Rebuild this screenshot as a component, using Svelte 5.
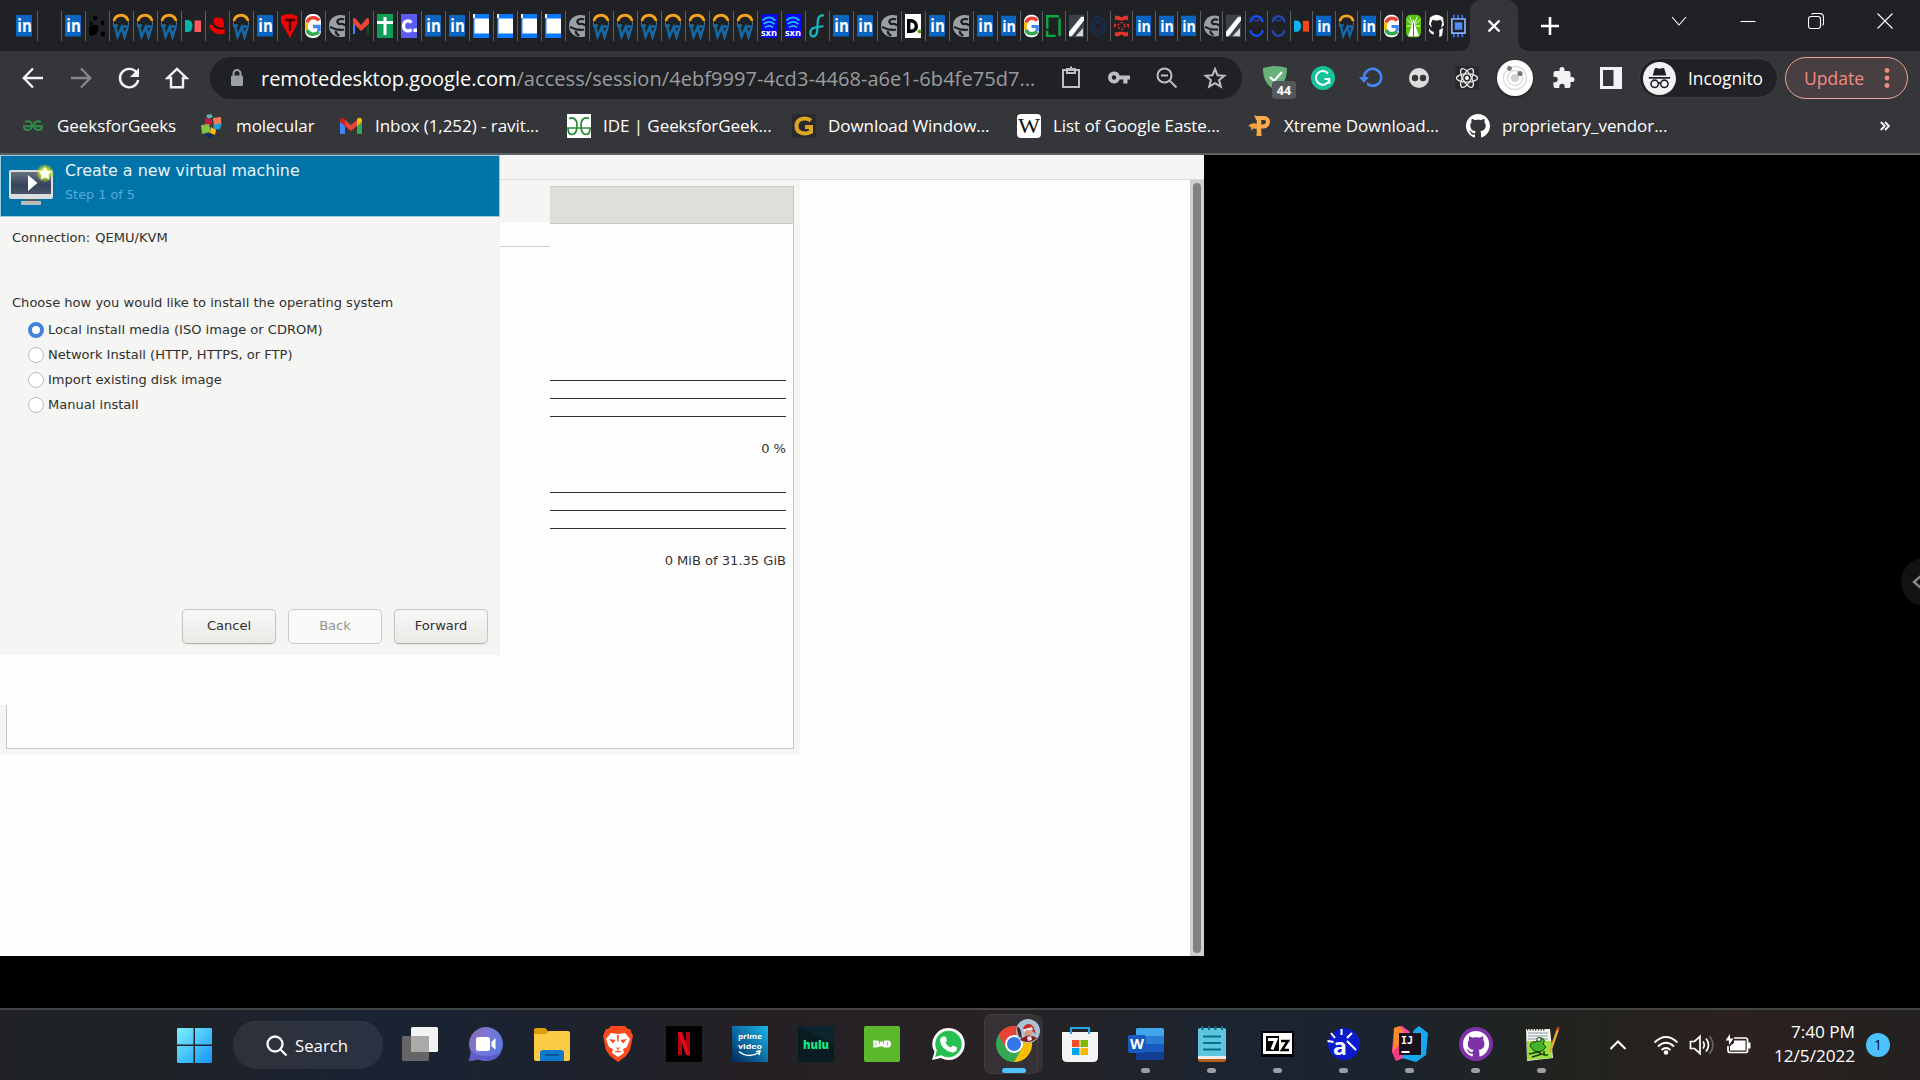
<script>
  // Browser tabs, in strip order; the last group is slightly narrower.
  const wideTabs = [
    'in', '', 'in', 'paws', 'w', 'w', 'w', 'di', 'hat', 'w', 'in', 't', 'g', 'globe', 'gmail', 'plus', 'c',
    'in', 'in', 'page', 'page', 'page', 'page', 'globe', 'w', 'w', 'w', 'w', 'w', 'w', 'w', 'sxn', 'sxn', 'f',
    'in', 'in', 'globe', 'd', 'in', 'globe', 'in'
  ];
  const slimTabs = [
    'in', 'g', 'bracket', 'slash', 'hex', 'virus', 'in', 'in', 'in', 'globe', 'slash', 'ring', 'ring2', 'di2',
    'in', 'w', 'in', 'g', 'tree', 'cat', 'chip'
  ];

  const bookmarks = [
    { icon: 'gfg', label: 'GeeksforGeeks' },
    { icon: 'cubes', label: 'molecular' },
    { icon: 'gmail2', label: 'Inbox (1,252) - ravit...' },
    { icon: 'ide', label: 'IDE | GeeksforGeek...' },
    { icon: 'goldg', label: 'Download Window...' },
    { icon: 'wiki', label: 'List of Google Easte...' },
    { icon: 'xp', label: 'Xtreme Download...' },
    { icon: 'octo', label: 'proprietary_vendor...' }
  ];

  const options = [
    'Local install media (ISO image or CDROM)',
    'Network Install (HTTP, HTTPS, or FTP)',
    'Import existing disk image',
    'Manual install'
  ];
  let selected = $state(0);

  const apps = [
    { icon: 'taskview' }, { icon: 'chat' }, { icon: 'folder' }, { icon: 'brave' }, { icon: 'netflix' },
    { icon: 'prime' }, { icon: 'hulu' }, { icon: 'duo' }, { icon: 'whatsapp' }, { icon: 'chrome', active: true },
    { icon: 'store' }, { icon: 'word', open: true }, { icon: 'notepad', open: true }, { icon: 'zip', open: true },
    { icon: 'alef', open: true }, { icon: 'idea', open: true }, { icon: 'hub', open: true }, { icon: 'npp', open: true }
  ];
</script>

{#snippet octocat(fill)}
  <path {fill} fill-rule="evenodd" d="M12 0C5.37 0 0 5.37 0 12c0 5.31 3.435 9.795 8.205 11.385.6.105.825-.255.825-.57 0-.285-.015-1.23-.015-2.235-3.015.555-3.795-.735-4.035-1.41-.135-.345-.72-1.41-1.23-1.695-.42-.225-1.02-.78-.015-.795.945-.015 1.62.87 1.845 1.23 1.08 1.815 2.805 1.305 3.495.99.105-.78.42-1.305.765-1.605-2.67-.3-5.46-1.335-5.46-5.925 0-1.305.465-2.385 1.23-3.225-.12-.3-.54-1.53.12-3.18 0 0 1.005-.315 3.3 1.23.96-.27 1.98-.405 3-.405s2.04.135 3 .405c2.295-1.56 3.3-1.23 3.3-1.23.66 1.65.24 2.88.12 3.18.765.84 1.23 1.905 1.23 3.225 0 4.605-2.805 5.625-5.475 5.925.435.375.81 1.095.81 2.22 0 1.605-.015 2.895-.015 3.3 0 .315.225.69.825.57A12.02 12.02 0 0 0 24 12c0-6.63-5.37-12-12-12z" />
{/snippet}

{#snippet favicon(name)}
  <svg class="fav" viewBox="0 0 16 24">
    {#if name === 'in'}
      <path fill="#0a66c2" d="M0 1h16v21.500H0z" /><text class="g-in" x="1.300" y="18" textLength="14.500" lengthAdjust="spacingAndGlyphs">in</text>
    {:else if name === 'paws'}
      <g fill="#000"><ellipse cx="6" cy="4" rx="2.2" ry="2.6" /><ellipse cx="13.500" cy="9" rx="2" ry="2.4" /><path d="M0 14c1-3 5-4 8-3 2 2 2 6-1 9-3 2-7 3-7 0zM1 6l3 3-3 3z" /><ellipse cx="14" cy="20" rx="2.2" ry="2.5" /></g>
    {:else if name === 'w'}
      <path fill="none" stroke="#f5a21d" stroke-width="2.800" d="M.8 6.800C3-.600 13-.600 15.200 6.800" /><path fill="none" stroke="#1669a8" stroke-width="2.500" d="M0 11.500h5M8 12.500h7.500M2 12 4.500 22.500 8.800 13 11.500 22.500 15 12" /><path fill="none" stroke="#6d7177" stroke-width=".9" d="M.5 7v4M15.500 7v4" />
    {:else if name === 'di' || name === 'di2'}
      <path fill={name === 'di' ? '#03b5aa' : '#0bb4f5'} d="M0 6h3c6 0 6 12 0 12H0z" /><path fill={name === 'di' ? '#ff5a5f' : '#f4451f'} d="M9.500 6.500H16v11.500H9.500z" />
    {:else if name === 'hat'}
      <path fill="#e00" d="M5 4.500c2-2 4 0 7-1 2 1 3 5 3 8l1 7c-2 4-12 1-15-4-2-3 1-5 3-4z" /><path fill="none" stroke="#111" stroke-width="1.800" d="M3.500 9.500c2 4 8 6 12 4.500" />
    {:else if name === 't'}
      <path fill="#f00505" d="M0 2q8-4 16 0v8L9 24 0 8z" /><path stroke="#3a0000" stroke-width="2.400" fill="none" d="M4 6h10M9 6v11" />
    {:else if name === 'g'}
      <rect width="16" height="24" rx="7" fill="#fff" /><path fill="none" stroke="#ea4335" stroke-width="3.600" d="M2 8.500C4 2.500 11 2.500 14 6.500" /><path fill="none" stroke="#fbbc05" stroke-width="3" d="M1.500 8v8" /><path fill="none" stroke="#34a853" stroke-width="3.600" d="M2 16c2 5 8 5.500 12 2" /><path fill="none" stroke="#4285f4" stroke-width="3.400" d="M8 12.500h6v5" />
    {:else if name === 'globe'}
      <path fill="#9aa0a6" d="M16 1.500C6-1 0 5 0 12s6 13 16 10.500z" /><path fill="none" stroke="#202124" stroke-width="2.300" d="M15 5.500c-5-2-9 2-5 4.500 3 0 5-1 6 2M1 13c4 1 5 3 8 2.500 3 0 3 1 6 0M10 22c-1-2-4-2-3-5" />
    {:else if name === 'gmail'}
      <path fill="#4285f4" d="M0 9l2 2v9H0z" /><path fill="#ea4335" d="M0 5q1-2 3 0l5 6 5-6q2-2 3 0v5l-8 7-8-8z" /><path fill="#174d23" d="M14 12l2-2v10h-2z" />
    {:else if name === 'plus'}
      <path fill="#0f9d58" d="M0 0h16v24H0z" /><path stroke="#fff" stroke-width="3" d="M0 8.500h16M8 3v18" />
    {:else if name === 'c'}
      <path fill="#5b5bf6" d="M0 0h16v24H0z" /><path fill="none" stroke="#fff" stroke-width="3.200" d="M10.500 8.500C7 5 2.500 7.500 2.500 12s4.500 6.500 8 3.500" /><path fill="#fff" d="M12.500 14.500H16V18h-3.500z" />
    {:else if name === 'page'}
      <path fill="#057aff" d="M0 0h16v24H0z" /><path fill="#fff" d="M1.500 4.500H16v15H1.500zM0 0h2v4H0z" />
    {:else if name === 'sxn'}
      <path fill="#0808f0" d="M0 0h16v24H0z" /><path fill="none" stroke="#16bdf5" stroke-width="1.800" d="M1.500 6.500c4-4 9-4 13 0M2.500 10c4-3 7-3 11 0M4 13.500c3-2.400 5-2.400 8 0" /><text class="g-sxn" x="0" y="21.500" textLength="16" lengthAdjust="spacingAndGlyphs">sxn</text>
    {:else if name === 'f'}
      <path fill="none" stroke="#18b8c0" stroke-width="2.200" d="M15 1.500c-6-1-6.500 4-6.500 9.500 0 8-1 11.500-5 11.500-3-1-3-7 1-8.500 4-1.500 6-1 10-2" />
    {:else if name === 'd'}
      <path fill="#fff" d="M0 0h16v24H0z" /><path fill="none" stroke="#000" stroke-width="3.400" d="M3.700 6.700v10.600h2c8 0 7-10.600 0-10.600z" /><circle cx="14.500" cy="17.500" r="1.900" fill="#65a30d" />
    {:else if name === 'bracket'}
      <path fill="none" stroke="#0aa83f" stroke-width="2.600" d="M1.300 15V1.500H14M1.300 17v5.500h9M14.500 4v19" />
    {:else if name === 'slash'}
      <path fill="#3b4347" d="M0 0h16v24H0z" /><path fill="#fff" d="M0 18 13 2h3v4L3 23H0z" /><path fill="#d5d8d9" d="M7 23l8-9v9z" />
    {:else if name === 'hex'}
      <path fill="none" stroke="#172e4e" stroke-width="1.800" d="M8 1l7 5.500v11L8 23l-7-5.500v-11zM8 7l4 3v5l-4 3-4-3v-5zM8 1v6M4 15l-3 3M12 15l3 3" />
    {:else if name === 'virus'}
      <path fill="#e23428" d="M1 1h4l3 2 3-2h4v5l-2-1-3 1H6L3 5 1 6zM0 9l3 2-3 3zM16 9l-3 2 3 3zM1 18l2 1 3-1h4l3 1 2-1v5h-4l-3-2-3 2H1z" /><circle cx="8" cy="12" r="3.500" fill="none" stroke="#e23428" stroke-width="1.800" stroke-dasharray="1.800 2" />
    {:else if name === 'ring' || name === 'ring2'}
      <path fill="none" stroke={name === 'ring' ? '#154df0' : '#2147b4'} stroke-width="2.600" d="M1.500 8c1-8.500 12-8.500 13 0M1.500 16.500c1 8 12 8 13 0" /><path fill="none" stroke="#1746c8" stroke-width="1.500" d="M4 4.500q4 4 8 0" />
    {:else if name === 'tree'}
      <rect width="16" height="24" rx="5" fill="#58c409" /><path fill="#fff" d="M8 4l2 8 4 11H2l4-11z" /><path stroke="#fff" d="M8 12 1 5M8 12 4 2M8 12l4-10M8 12l7-7M8 12H1M8 12h7" /><path stroke="#287b10" d="M8 9v14" />
    {:else if name === 'cat'}
      <path fill="#fff" d="M1 3q7-6 14 0l1 8-3 3 1-6-2-3-2 1H6L4 5 2 9l1 5-3-4zM0 14q2 4 5 4v3q-3 0-5-4zM11 16l4-2-1 8-3 2z" />
    {:else if name === 'chip'}
      <path stroke="#3573e8" stroke-width="2" d="M3 0v24M7.500 0v24M12 0v24" /><path fill="#202124" stroke="#8ab0f4" stroke-width="1.800" d="M.9 4.500h14v15H.9z" /><path fill="#4f8df5" d="M4 8h8v8H4z" />
    {/if}
  </svg>
{/snippet}

{#snippet markicon(name)}
  <svg class="mark" viewBox="0 0 24 24">
    {#if name === 'gfg'}
      <path fill="none" stroke="#2f8d46" stroke-width="1.900" d="M4 7.800c4-1.500 7 0 7 3.700 0 5-7 6-8 2M20 7.800c-4-1.500-7 0-7 3.700 0 5 7 6 8 2M2 12.300h20" />
    {:else if name === 'cubes'}
      <path fill="#5bb5b0" d="M6 1l5-1 2 3-5 2z" /><path fill="#c2183a" d="M5 4l7 1v6l-7 1z" /><path fill="#f47b54" d="M13 4l8-1v7l-7 2z" /><path fill="#1c9fd0" d="M13 11l9-2-2 6-6 1z" /><path fill="#83c341" d="M1 11l8-1 2 8-9 2z" /><path fill="#fdb913" d="M11 13l5 3-1 5-5-2z" /><path fill="#092f62" d="M6 19l8 2-5 3-4-2z" />
    {:else if name === 'gmail2'}
      <path fill="#4285f4" d="M1 7l5 4v9H2q-1 0-1-1z" /><path fill="#34a853" d="M18 11l5-4v12q0 1-1 1h-4z" /><path fill="#ea4335" d="M6 6l6 5 6-5v6l-6 5-6-5z" /><path fill="#c5221f" d="M1 6q1-4 5-1v7l-5-4z" /><path fill="#fbbc04" d="M23 6q-1-4-5-1v7l5-4z" />
    {:else if name === 'ide'}
      <path fill="#fff" d="M0 0h24v24H0z" /><path fill="none" stroke="#2a8a35" stroke-width="1.700" d="M2 4.500C6 2.500 10 5 10 11s-2 9.500-5 9.500-4-3-4-6.500h22c0 3.500-1 6.500-4 6.500s-5-3.500-5-9.500 4-8.500 8-6.500" />
    {:else if name === 'goldg'}
      <rect width="24" height="24" rx="2" fill="#292a2d" /><path fill="none" stroke="#dca71f" stroke-width="4" d="M19 6.500C14 2.500 4.500 4.500 4.500 12s8 9 14.500 6v-5h-6" />
    {:else if name === 'wiki'}
      <rect width="24" height="24" rx="4" fill="#fff" /><text class="g-wiki" x="1" y="18.500" textLength="22" lengthAdjust="spacingAndGlyphs">W</text>
    {:else if name === 'xp'}
      <path fill="none" stroke="#fbaa50" stroke-width="4.500" d="M11 21V4" /><path fill="none" stroke="#fbaa50" stroke-width="4" d="M8 4h8c6 0 5 8.500-1 8.500H6" /><path fill="#f8a13c" d="M8 1.500H6l2 4zM0 12q4-4 9-2v4.500H5L3.500 17l-.5-4zM8.500 20h5v2h-5z" />
    {:else if name === 'octo'}
      {@render octocat('#fff')}
    {/if}
  </svg>
{/snippet}

{#snippet appicon(name)}
  <svg class="app-svg" viewBox="0 0 36 36">
    {#if name === 'taskview'}
      <rect x="0" y="10" width="27" height="25" rx="1.500" fill="#666" /><rect x="9" y="1" width="27" height="25" rx="1.500" fill="#f2f2f2" /><path fill="#aaa" d="M9 10h18v16H9z" />
    {:else if name === 'chat'}
      <defs><linearGradient id="ch" x1="0" x2="1" y1="0" y2=".6"><stop stop-color="#9068a8" /><stop offset=".5" stop-color="#7878d8" /><stop offset="1" stop-color="#5a78dc" /></linearGradient></defs>
      <path fill="url(#ch)" d="M18 1a17 17 0 1 1-7 32.500L1 35l2-9A17 17 0 0 1 18 1z" /><path fill="#5b56c4" d="M3 24q8 10 30 3-6 11-22 6.500L1 35z" opacity=".8" /><rect x="8" y="11" width="14" height="14" rx="2.500" fill="#fff" /><path fill="#fff" d="M23.500 16l4-4v12l-4-4z" />
    {:else if name === 'folder'}
      <path fill="#e09f09" d="M0 4q0-2 2-2h9l4 4-3 4H0z" /><path fill="#fccb45" d="M0 8h12l3-3h19q2 0 2 2v26q0 2-2 2H2q-2 0-2-2z" /><path fill="#0f78cf" d="M6 35V27q0-3 3-3h18q3 0 3 3v8z" /><path stroke="#07528f" stroke-width="1.800" d="M11 29h14" />
    {:else if name === 'brave'}
      <path fill="#fb4b1c" d="M11 0h14l3 3h2l3 7-3 14-4 6-8 6-8-6-4-6L3 10l3-7h2z" /><path fill="#fff" d="M11 7l7 1 7-1 5 6-3 8-4 2 1 4-6 4-6-4 1-4-4-2-3-8z" /><path fill="#fb4b1c" d="M9 13l6.500 1-2.500 3.500zM27 13l-6.500 1 2.500 3.500zM15.500 21l2.500 1 2.500-1-2.500 3zM14 25.500l4-1 4 1-4 1zM17 9h2l-.5 7h-1z" />
    {:else if name === 'netflix'}
      <path d="M0 0h36v36H0z" /><path fill="#b1060f" d="M12 6h4v23l-4 .6zM20 6h4v23.600l-4-.6z" /><path fill="#e50914" d="M12 6h4l8 23.600-4-.6z" />
    {:else if name === 'prime'}
      <defs><linearGradient id="pv" x1="1" x2="0" y1="0" y2="1"><stop stop-color="#19b5e8" /><stop offset="1" stop-color="#02295f" /></linearGradient></defs>
      <path fill="url(#pv)" d="M0 0h36v36H0z" /><text class="g-prime" x="6" y="12.500" textLength="24" lengthAdjust="spacingAndGlyphs">prime</text><text class="g-prime" x="6" y="22.500" textLength="24" lengthAdjust="spacingAndGlyphs">video</text><path fill="none" stroke="#fff" stroke-width="1.500" d="M7 25.500c6 5 14 5 20 1M24 25.500l4-.5-1 4" />
    {:else if name === 'hulu'}
      <path fill="#081c22" d="M0 0h36v36H0z" /><path fill="#102c38" d="M0 0h36v18z" opacity=".6" /><text class="g-hulu" x="5" y="22.500" textLength="26" lengthAdjust="spacingAndGlyphs">hulu</text>
    {:else if name === 'duo'}
      <rect width="36" height="36" rx="2" fill="#5cb82c" /><path fill="#fff" d="M9 14.500h4q1.500 0 2 1h4l1-1h4q3 0 3 3.500t-3 3.500h-4l-1-1h-4q-1 1-4 1H9l.5-3z" /><path stroke="#5cb82c" stroke-width=".8" d="M12 16.500v3M15.500 15v3M19.500 15v3M23.500 16.500v3" />
    {:else if name === 'whatsapp'}
      <path fill="#fff" d="M18.500 2a16 16 0 1 1-7.500 30L2 34l2.500-8A16 16 0 0 1 18.500 2z" /><circle cx="18.500" cy="18" r="13.200" fill="#25c04f" /><path fill="#25c04f" d="M5 31l2-7 5 5z" /><path fill="#fff" d="M13 10.500l2.500 0 1.500 4-1.500 2q2 4 5.500 5l2-2 4 2q0 5-5 5-11-3-12-12 0-3 3-4z" />
    {:else if name === 'chrome'}
      <circle cx="18" cy="18" r="18" fill="#34a853" /><path fill="#ea4335" d="M2.400 9A18 18 0 0 1 33.600 9H18L10.200 22.500z" /><path fill="#fbbc04" d="M33.600 9A18 18 0 0 1 18 36l7.800-13.500L18 9z" /><circle cx="18" cy="18" r="9" fill="#fff" /><circle cx="18" cy="18" r="7" fill="#3478e8" />
      <g transform="translate(32 5)"><circle r="12" fill="#a9c3d4" /><path fill="#ca2a2a" d="M-5-2C-3-9 4-8 6-3l2 6-4-3z" /><path fill="#e4ecf0" d="M-5-1.500l9-2.500 1 3-9 2.500z" /><circle cx="0" cy="2.500" r="3.500" fill="#d99b7c" /><path fill="#3c2a2a" d="M-11-4q3 0 4 5l1 7q-5-3-5-12z" /><path fill="#8a1c20" d="M-8 9Q0 1 9 7 2 14-8 9z" /><path fill="#f2e8e4" d="M-1 6l4-1 1 4-4 1z" /></g>
    {:else if name === 'store'}
      <path fill="#f4f4f4" d="M0 6h36v25q0 5-5 5H5q-5 0-5-5z" /><path fill="none" stroke="#20a8e8" stroke-width="2.200" d="M9 8V2h18v6" /><path fill="#f25022" d="M10 14h7.500v7H10z" /><path fill="#7fba00" d="M18.500 14H26v7h-7.500z" /><path fill="#00a4ef" d="M10 22h7.500v7H10z" /><path fill="#ffb900" d="M18.500 22H26v7h-7.500z" />
    {:else if name === 'word'}
      <path fill="#41a5ee" d="M9 2h25q2 0 2 2v6H8V4q0-2 1-2z" /><path fill="#2b7cd3" d="M8 10h28v8H8z" /><path fill="#185abd" d="M8 18h28v8H8z" /><path fill="#103f91" d="M8 26h28v6q0 2-2 2H10q-2 0-2-2z" /><rect y="9" width="18" height="18" rx="2" fill="#185abd" /><text class="g-word" x="2" y="23" textLength="14" lengthAdjust="spacingAndGlyphs">W</text>
    {:else if name === 'notepad'}
      <path fill="#5ec5df" d="M4 4q0-2 2-2h24q2 0 2 2v26H4z" /><path fill="#eee" d="M4 30h28v3H4z" /><path fill="#b85d16" d="M4 33h28v1q0 2-2 2H6q-2 0-2-2z" /><path stroke="#08708c" stroke-width="2" d="M9 10.500h18M9 17h18M9 23.500h18M8.500 0v4M15 0v4M21.500 0v4M28 0v4" />
    {:else if name === 'zip'}
      <path fill="#000" d="M1 5h33v26H1z" /><path fill="#fff" d="M3 7h29v21H3z" /><path fill="#000" d="M6 10h13v15H6z" /><path fill="none" stroke="#fff" stroke-width="3" d="M8 13.500h8l-4 10" /><path fill="none" stroke="#000" stroke-width="2.500" d="M21 15h7l-6 9h7" />
    {:else if name === 'alef'}
      <circle cx="18" cy="18" r="16" fill="#0d1ccb" /><path stroke="#fff" stroke-width="2" d="M15.500 3v6M5 7l4 5M1.500 15l6 1M26 7l-5 5M21 15l9 9" /><text class="g-alef" x="7" y="29" textLength="14" lengthAdjust="spacingAndGlyphs">a</text>
    {:else if name === 'idea'}
      <path fill="#fb43a0" d="M2 2l8-2 8 6-2 24-12 5-4-10z" /><path fill="#ff8a2b" d="M2 2l6-2 5 8-9 18-4 1 2-8z" /><path fill="#f5388a" d="M0 26l8-8v12l-4 5z" /><path fill="#18a7ef" d="M22 4l5-4 9 7-2 22-10 7-14-4z" /><path fill="#160f1d" d="M7 7h22v22H7z" /><path stroke="#fff" stroke-width="2" d="M9.500 26h8" /><text class="g-ij" x="9" y="18" textLength="12" lengthAdjust="spacingAndGlyphs">IJ</text>
    {:else if name === 'hub'}
      <circle cx="18" cy="18" r="17" fill="#7e32a8" /><g transform="translate(5 5) scale(1.090)">{@render octocat('#fff')}</g>
    {:else if name === 'npp'}
      <path fill="#f4f6ec" d="M2 3h24l3 29-26 3z" /><path fill="#9bdc3f" d="M3 15h24l1 17-25 2z" /><path stroke="#8a9ab0" d="M4 7h20M4 10h20M4 13h20" /><path stroke="#222" stroke-width="2" stroke-dasharray="1.200 1.500" d="M3 3.500h18" /><path fill="#43b329" stroke="#173c10" d="M6 20q1-5 6-4 2-5 6-4 4 2 1 6l3 3q-3 5-8 5t-8-6z" /><circle cx="15" cy="13.500" r="2" fill="#fff" stroke="#173c10" /><path fill="none" stroke="#173c10" stroke-width="1.500" d="M5 28l9-2 4 2-10 3M20 25v4h4" /><path stroke="#e6a52e" stroke-width="2.500" d="M34 3 26 26" /><path stroke="#c33" stroke-width="2.500" d="M34.500 1l-1 3" />
    {/if}
  </svg>
{/snippet}

<div class="screen">
  <header class="tabstrip">
    {#each wideTabs as tab}<div class="tab">{@render favicon(tab)}</div>{/each}
    {#each slimTabs as tab}<div class="tab slim">{@render favicon(tab)}</div>{/each}
    <div class="tab-active">
      <svg width="14" height="14" viewBox="0 0 14 14"><path d="M1.500 1.500l11 11M12.500 1.500l-11 11" stroke="#fff" stroke-width="2.400" /></svg>
    </div>
    <svg class="newtab" width="18" height="18" viewBox="0 0 18 18"><path d="M9 0v18M0 9h18" stroke="#fff" stroke-width="2.600" /></svg>
    <div class="winctl">
      <svg viewBox="0 0 16 16"><path d="M1 4l7 8 7-8" /></svg>
      <svg viewBox="0 0 16 16"><path d="M.5 8.500h15" /></svg>
      <svg viewBox="0 0 16 16"><rect x=".5" y="3.500" width="12" height="12" rx="2.500" /><path d="M3.500 1.200Q4.500.5 6 .5h5.500q4 0 4 4V10q0 1.500-.8 2.500" /></svg>
      <svg viewBox="0 0 16 16"><path d="M.5.5l15 15M15.500.5l-15 15" /></svg>
    </div>
  </header>

  <div class="toolbar">
    <nav class="nav">
      <svg viewBox="0 0 24 24"><path d="M22 12H3M12 2.500 2.800 12l9.200 9.500" /></svg>
      <svg viewBox="0 0 24 24" class="dim"><path d="M2 12h19M12 2.500l9.200 9.500-9.200 9.500" /></svg>
      <svg viewBox="0 0 24 24"><path d="M19.500 6.500A9.200 9.200 0 1 0 21.200 14" /><path class="solid" d="M22 2v9h-9z" /></svg>
      <svg viewBox="0 0 24 24"><path d="M12 2.800 2.500 12H6v9.200h12V12h3.500z" /></svg>
    </nav>
    <div class="omnibox">
      <svg class="lock" viewBox="0 0 14 18"><path d="M3.500 8V4.500a3.500 3.500 0 0 1 7 0V8" fill="none" stroke="#9aa0a6" stroke-width="2" /><rect x="1" y="6.500" width="12" height="10.500" rx="1.500" fill="#9aa0a6" /></svg>
      <span class="url"><b>remotedesktop.google.com</b><i>/access/session/4ebf9997-4cd3-4468-a6e1-6b4fe75d7...</i></span>
      <div class="omni-icons">
        <svg viewBox="0 0 24 24"><path d="M4 4h16v17H4zM8 3h8v4H8zM11 1.500h2" /></svg>
        <svg viewBox="0 0 24 24"><path fill="#bdbfc2" stroke="none" fill-rule="evenodd" d="M7 5.500a6 6 0 0 1 5.700 4H23v4h-2.500v4h-4.200v-4h-3.600A6 6 0 1 1 7 5.500zM7 9.300a2.200 2.200 0 1 0 0 4.400 2.200 2.200 0 0 0 0-4.400z" /></svg>
        <svg viewBox="0 0 24 24"><circle cx="9.500" cy="9.500" r="7" /><path d="M14.500 14.500l7 7M6 9.500h7" /></svg>
        <svg viewBox="0 0 24 24"><path d="M12 3l2.600 6.300 6.700.5-5.200 4.300 1.700 6.600L12 17.200l-5.800 3.500 1.700-6.600-5.200-4.300 6.700-.5z" /></svg>
      </div>
    </div>
    <div class="extensions">
      <div class="shield">
        <svg viewBox="0 0 24 24"><path fill="#67b279" d="M0 2q12-4 24 0c0 13-5 18-12 22C5 20 0 15 0 2z" /><path d="M7 11l4 4 8-9" fill="none" stroke="#fff" stroke-width="2.200" /></svg>
        <span>44</span>
      </div>
      <svg viewBox="0 0 24 24"><circle cx="12" cy="12" r="12" fill="#15c39a" /><path d="M17 7.500A6.800 6.800 0 1 0 18.300 14M13.500 13h4.800v4.800" fill="none" stroke="#fff" stroke-width="2" /></svg>
      <svg viewBox="0 0 24 24"><path d="M4.500 13.500A8.500 8.500 0 1 0 6 6" fill="none" stroke="#4285f4" stroke-width="2.600" transform="translate(1 0)" stroke-dasharray="60" /><path fill="#35363a" d="M3 14h5v6H3z" /><path fill="none" stroke="#4285f4" stroke-width="2.600" d="M4.800 11A8.700 8.700 0 0 1 8 5" /><path d="M0 11h10l-5 6z" fill="#4285f4" /></svg>
      <svg viewBox="0 0 24 24"><circle cx="12" cy="12" r="10" fill="#dcdcdc" /><circle cx="8" cy="12" r="3.200" fill="#35363a" /><circle cx="16" cy="12" r="3.200" fill="#35363a" /></svg>
      <svg viewBox="0 0 24 24"><rect width="24" height="24" rx="2" fill="#292a2d" /><g fill="none" stroke="#e8e8e8" stroke-width="1.300"><ellipse cx="12" cy="12" rx="10.500" ry="4.200" /><ellipse cx="12" cy="12" rx="10.500" ry="4.200" transform="rotate(60 12 12)" /><ellipse cx="12" cy="12" rx="10.500" ry="4.200" transform="rotate(120 12 12)" /></g><circle cx="12" cy="12" r="2" fill="#fff" /></svg>
      <svg class="orbit" viewBox="0 0 36 36"><circle cx="18" cy="18" r="18" fill="#fff" /><g fill="none" stroke="#dedede" stroke-width="1.500"><circle cx="18" cy="18" r="11.500" /><circle cx="18" cy="18" r="7.500" /></g><circle cx="18" cy="18" r="4" fill="#d0d0d0" /><circle cx="12.500" cy="8.500" r="2.400" fill="#777" /><circle cx="23" cy="13.500" r="2.600" fill="#777" /></svg>
      <svg viewBox="0 0 24 24"><path fill="#f1f3f4" d="M20 11h-1.500V7q0-2-2-2h-4V3.500a2.500 2.500 0 0 0-5 0V5h-4q-2 0-2 2v3.800H3a2.700 2.700 0 0 1 0 5.400H1.500V20q0 2 2 2h3.800v-1.500a2.700 2.700 0 0 1 5.400 0V22h3.800q2 0 2-2v-4H20a2.500 2.500 0 0 0 0-5z" transform="translate(1 0)" /></svg>
      <svg viewBox="0 0 24 24"><path fill="#f1f3f4" fill-rule="evenodd" d="M1 1h22v22H1zM4 4v16h10.500V4z" /></svg>
    </div>
    <div class="incognito">
      <svg viewBox="0 0 34 34"><circle cx="17" cy="17" r="17" fill="#f1f3f4" /><path fill="#202124" d="M12 7q.5-1 1.500-.7L17 7l3.500-.7q1-.3 1.500.7l2 7H10zM6 15.500h22v1.800H6z" /><g fill="none" stroke="#202124" stroke-width="1.600"><circle cx="12" cy="22.500" r="3.800" /><circle cx="22" cy="22.500" r="3.800" /><path d="M15.800 22q1.200-1 2.400 0" /></g></svg>
      <span>Incognito</span>
    </div>
    <button class="update"><span>Update</span><svg width="6" height="22" viewBox="0 0 6 22" fill="#f28b82"><circle cx="3" cy="3.500" r="2.400" /><circle cx="3" cy="11" r="2.400" /><circle cx="3" cy="18.500" r="2.400" /></svg></button>
  </div>

  <div class="bookmarks">
    {#each bookmarks as b}
      <div class="bookmark">{@render markicon(b.icon)}<span>{b.label}</span></div>
    {/each}
    <svg class="more" width="10" height="10" viewBox="0 0 10 10"><path d="M.8 1l4 4-4 4M5 1l4 4-4 4" fill="none" stroke="#fff" stroke-width="1.800" /></svg>
  </div>

  <main class="viewport">
    <div class="remote">
      <div class="menubar"></div>
      <div class="workspace">
        <div class="manager">
          <div class="vmlist">
            <div class="vmhead"></div>
            <div class="stats">
              <div class="graph"></div>
              <p>0 %</p>
              <div class="graph"></div>
              <p>0 MiB of 31.35 GiB</p>
            </div>
          </div>
        </div>
        <div class="track"><div class="thumb"></div></div>
      </div>
      <!-- blank window left unpainted behind the wizard -->
      <div class="ghost"></div>
      <section class="wizard">
        <div class="banner">
          <svg width="46" height="44" viewBox="0 0 46 44">
            <defs>
              <linearGradient id="scr" x2="0" y2="1"><stop stop-color="#66727f" /><stop offset=".6" stop-color="#36435a" /><stop offset="1" stop-color="#46556a" /></linearGradient>
              <radialGradient id="glow"><stop stop-color="#fff" /><stop offset=".5" stop-color="#d8e234" /><stop offset="1" stop-color="#a7c626" stop-opacity=".15" /></radialGradient>
            </defs>
            <path fill="#555b60" d="M17 34h12v5H17z" /><rect x="13" y="37" width="20" height="4" rx="1" fill="#b9bcbd" />
            <rect x="1" y="6" width="44" height="29" rx="2" fill="#dcdede" /><path fill="url(#scr)" d="M3 8h40v22H3z" /><path fill="#fff" d="M20 11l9.500 8L20 27z" />
            <circle cx="37" cy="9" r="9" fill="url(#glow)" /><path fill="#fff" d="M37 2.500l2 4.500 5 .5-3.800 3.200 1.200 5-4.400-2.700-4.400 2.700 1.200-5L30 7.500l5-.5z" />
          </svg>
          <div class="titles"><h1>Create a new virtual machine</h1><h2>Step 1 of 5</h2></div>
        </div>
        <p class="conn"><span>Connection:</span><span>QEMU/KVM</span></p>
        <p class="ask">Choose how you would like to install the operating system</p>
        <div class="radios">
          {#each options as label, i}
            <label><input type="radio" name="install" value={i} bind:group={selected} /><span>{label}</span></label>
          {/each}
        </div>
        <div class="buttons">
          <button>Cancel</button><button disabled>Back</button><button>Forward</button>
        </div>
      </section>
    </div>
    <div class="handle"><svg width="14" height="16" viewBox="0 0 14 16"><path d="M10 1 2 8l8 7" fill="none" stroke="#8a8a8a" stroke-width="2.400" /></svg></div>
  </main>

  <footer class="taskbar">
    <svg class="start" viewBox="0 0 36 36">
      <defs><linearGradient id="win" x2="1" y2="1"><stop stop-color="#7df0fd" /><stop offset="1" stop-color="#1496f8" /></linearGradient></defs>
      <path fill="url(#win)" d="M1 0h16v17H0V1zM18.500 0H35l1 1v16H18.500zM0 18.500h17V36H1l-1-1zM18.500 18.500H36V35l-1 1H18.500z" />
    </svg>
    <div class="search"><svg width="22" height="22" viewBox="0 0 22 22"><circle cx="9" cy="9" r="7.500" /><path d="M14.500 14.500l6 6" /></svg><span>Search</span></div>
    <div class="apps">
      {#each apps as app}
        <div class="app" class:active={app.active} class:open={app.open}>{@render appicon(app.icon)}</div>
      {/each}
    </div>
    <div class="tray">
      <svg width="18" height="12" viewBox="0 0 18 12"><path d="M1.500 10 9 2.500l7.500 7.500" stroke-width="2" /></svg>
      <svg width="26" height="22" viewBox="0 0 26 22"><path d="M1.500 8.500q11.500-11 23 0M5 12.500q8-7.500 16 0M8.500 16q4.500-4 9 0" stroke-width="1.900" /><circle cx="13" cy="18.500" r="2.300" fill="#fff" stroke="none" /></svg>
      <svg width="26" height="22" viewBox="0 0 26 22"><path d="M1.500 7.500h4L11 2.500v17l-5.500-5h-4z" /><path d="M14 7.500q2.500 3.500 0 7M17 4.500q5 6.500 0 13" /><path d="M20.500 2q7 9 0 18" stroke="#666" /></svg>
      <svg width="26" height="22" viewBox="0 0 26 22"><path d="M9 4h11.500q2 0 2 2v10.500q0 2-2 2H5q-2 0-2-2V12" /><path fill="#fff" stroke="none" d="M9 6.500h11.500v10H5V12l4-3zM23 8.500h2.500v6H23zM5 0 .5 6.500H4V11l4.500-6.500H5z" /></svg>
    </div>
    <div class="clock"><span>7:40 PM</span><span>12/5/2022</span></div>
    <div class="badge">1</div>
  </footer>
</div>

<style>
  :global(body) { margin: 0; background: #000; overflow: hidden; }
  .screen { width: 1920px; height: 1080px; display: flex; flex-direction: column; background: #000; color: #fff; font-family: 'Open Sans', 'Noto Sans', sans-serif; }
  svg { display: block; flex: none; }
  p, h1, h2 { margin: 0; font-weight: 400; }

  .tabstrip { height: 51px; flex: none; display: flex; align-items: center; background: #202124; padding-left: 13px; }
  .tab { width: 24px; height: 30px; flex: none; box-sizing: border-box; border-left: 1px solid #5c5e62; padding: 3px 0 0 3px; }
  .tab:first-child { border-left-color: transparent; padding-left: 2px; }
  .slim { width: 22.5px; }
  .fav { width: 16px; height: 24px; overflow: visible; }
  .slim .fav { width: 15px; }
  .g-in { font: 700 17px 'Open Sans', sans-serif; fill: #fff; }
  .g-sxn { font: 700 8px 'Open Sans', sans-serif; fill: #fff; }
  .tab-active { width: 48px; height: 51px; flex: none; background: #35363a; border-radius: 11px 11px 0 0; display: grid; place-items: center; position: relative; }
  .tab-active::before, .tab-active::after { content: ''; position: absolute; bottom: 0; width: 10px; height: 10px; }
  .tab-active::before { right: 100%; background: radial-gradient(circle at 0 0, #202124 9.500px, #35363a 10px); }
  .tab-active::after { left: 100%; background: radial-gradient(circle at 100% 0, #202124 9.500px, #35363a 10px); }
  .newtab { margin-left: 23px; }
  .winctl { margin-left: auto; display: flex; gap: 52.700px; padding: 0 27px 9px 0; }
  .winctl svg { width: 16px; height: 16px; fill: none; stroke: #fff; stroke-width: 1.100; }

  .toolbar { height: 54px; flex: none; display: flex; align-items: center; background: #35363a; padding-left: 21px; }
  .nav { display: flex; gap: 24px; width: 189px; flex: none; }
  .nav svg { width: 24px; height: 24px; fill: none; stroke: #f1f3f4; stroke-width: 2.400; }
  .nav .dim { stroke: #85868a; }
  .nav .solid { fill: #f1f3f4; stroke: none; }
  .omnibox { width: 1032px; height: 42px; flex: none; border-radius: 21px; background: #202124; box-sizing: border-box; padding: 0 15px 0 20px; display: flex; align-items: center; }
  .lock { width: 14px; height: 18px; }
  .url { margin-left: 17px; font-size: 20px; white-space: nowrap; }
  .url b { font-weight: 400; letter-spacing: -0.020px; }
  .url i { font-style: normal; color: #9a9c9f; letter-spacing: 0.060px; }
  .omni-icons { margin-left: auto; display: flex; gap: 24px; }
  .omni-icons svg { width: 24px; height: 24px; fill: none; stroke: #bdbfc2; stroke-width: 2; }
  .extensions { display: flex; align-items: center; gap: 24px; padding-left: 21px; }
  .extensions svg { width: 24px; height: 24px; }
  .extensions .orbit { width: 36px; height: 36px; margin: 0 -6px; filter: drop-shadow(0 1px 1px #0008); }
  .shield { position: relative; }
  .shield span { position: absolute; left: 9px; top: 15px; width: 24px; height: 18px; border-radius: 3px; background: #55565a; font: 700 12.500px/19px 'Open Sans', sans-serif; text-align: center; }
  .incognito { margin-left: 16px; width: 134px; height: 38px; border: 1.500px solid #3e4043; border-radius: 21px; background: #202124; display: flex; align-items: center; gap: 12px; padding-left: 3px; font-size: 17.300px; box-sizing: content-box; flex: none; }
  .incognito svg { width: 33px; height: 33px; }
  .update { margin-left: 7px; width: 123px; height: 42px; border: 1.500px solid #f0a29b; border-radius: 21px; background: #483f43; color: #f28b82; font: 17.500px 'Open Sans', sans-serif; display: flex; align-items: center; justify-content: space-between; padding: 0 17px 0 18px; flex: none; }

  .bookmarks { height: 50px; flex: none; box-sizing: border-box; background: #35363a; border-bottom: 2px solid #5f6064; display: grid; grid-template-columns: 179px 139px 228px 225px 225px 231px 218px 414px 20px; padding: 0 0 7px 21px; align-items: center; }
  .bookmark { display: flex; align-items: center; gap: 12px; font-size: 17px; letter-spacing: -0.060px; white-space: nowrap; }
  .mark { width: 24px; height: 24px; overflow: visible; }
  .g-wiki { font: 20px 'Liberation Serif', serif; fill: #111; }

  .viewport { height: 853px; flex: none; position: relative; overflow: hidden; background: #000; }
  .remote { width: 1204px; height: 801px; background: #fefefe; display: flex; flex-direction: column; position: relative; }
  .menubar { height: 24px; flex: none; background: #f5f6f4; border-bottom: 1px solid #dbdbd9; }
  .workspace { flex: 1; display: flex; justify-content: space-between; align-items: flex-start; }
  .manager { width: 800px; height: 575px; background: #f5f5f3; box-sizing: border-box; padding: 6px 6px 6px 6px; }
  .vmlist { height: 100%; border: 1px solid #c6c6c4; background: #fefefe; box-sizing: border-box; }
  .vmhead { height: 36px; background: #dededa; border-bottom: 1px solid #c6c6c4; }
  .stats { padding: 156px 7px 0 543px; }
  .graph { height: 37px; box-sizing: border-box; background: linear-gradient(#303030, #303030) 0 0 / 100% 1px no-repeat, linear-gradient(#303030, #303030) 0 18px / 100% 1px no-repeat, linear-gradient(#303030, #303030) 0 36px / 100% 1px no-repeat; }
  .stats p { height: 75px; box-sizing: border-box; padding-top: 24px; font: 13.050px/16px 'DejaVu Sans', sans-serif; text-align: right; color: #333; }
  .track { width: 14px; height: 776px; background: #cfd1ce; box-sizing: border-box; padding: 3px; }
  .thumb { height: 100%; border-radius: 4px; background: #80827f; }
  .ghost { position: absolute; left: 0; top: 25px; width: 550px; height: 525px; box-sizing: border-box; background: linear-gradient(#f5f5f3 42px, #fefefe 42px 66px, #d0d0ce 66px 67px, #fefefe 67px); }
  .wizard { position: absolute; left: 0; top: 0; width: 500px; height: 500px; background: #f5f5f3; color: #303030; font: 13.050px/16px 'DejaVu Sans', sans-serif; display: flex; flex-direction: column; }
  .banner { height: 62px; box-sizing: border-box; border: 1px solid #9ccbe2; background: #0073a9; display: flex; padding: 8px 0 0 7px; gap: 11px; }
  .titles { margin-top: -3px; }
  h1 { font-size: 15.900px; line-height: 20px; color: #eaf5fa; }
  h2 { font-size: 12.800px; line-height: 16px; color: #56aadb; margin-top: 6px; }
  .conn { display: flex; gap: 5px; padding: 13px 12px 0; }
  .ask { padding: 49px 12px 0; }
  .radios { padding: 6px 0 0 28px; }
  label { display: flex; align-items: center; gap: 4px; height: 25px; }
  input { appearance: none; margin: 0; width: 16px; height: 16px; box-sizing: border-box; border: 1px solid #bdbdbb; border-radius: 50%; background: #fff; flex: none; }
  input:checked { border: 4.500px solid #4284db; }
  .buttons { margin-top: auto; display: flex; justify-content: flex-end; gap: 12px; padding: 0 12px 11px; }
  .buttons button { width: 94px; height: 35px; border: 1px solid #c4c4c1; border-bottom-color: #b3b3b0; border-radius: 5px; background: linear-gradient(#f8f8f7, #e9e9e6); box-shadow: 0 1px 2px #0001; font: inherit; color: #303030; padding: 0 0 2px; }
  .buttons button:disabled { background: #fafaf8; color: #929595; box-shadow: none; border-color: #c9c9c6; }
  .handle { position: absolute; left: 1901px; top: 403px; width: 48px; height: 48px; border-radius: 50%; background: #121212; display: flex; align-items: center; padding-left: 11px; box-sizing: border-box; }

  .taskbar { height: 72px; flex: none; box-sizing: border-box; border-top: 2px solid #424446; display: flex; align-items: center; padding-left: 177px; background: linear-gradient(90deg, #202226, #1f2228 180px, #1a2334 380px, #1d222d 580px, #252023 760px, #272224 1000px, #1c2430 1220px, #1c2330 1360px, #20231f 1540px, #2c211f 1730px, #232120 1920px); }
  .start { width: 35px; height: 35px; }
  .search { margin-left: 21px; width: 150px; height: 48px; box-sizing: border-box; border-radius: 24px; background: #ffffff12; border-top: 1px solid #ffffff0c; display: flex; align-items: center; gap: 7px; padding-left: 33px; font-size: 16.800px; flex: none; }
  .search svg { fill: none; stroke: #fff; stroke-width: 2.300; }
  .apps { margin-left: 4px; display: flex; flex: none; }
  .app { width: 66px; height: 70px; display: grid; place-items: center; position: relative; }
  .app-svg { width: 36px; height: 36px; position: relative; top: -1px; z-index: 1; overflow: visible; }
  .app.open::after { content: ''; position: absolute; bottom: 7px; left: 28px; width: 9px; height: 5px; border-radius: 3px; background: #9b9da0; }
  .app.active::before { content: ''; position: absolute; inset: 4px 9px 6px 3px; border-radius: 7px; background: #353134; border: 1px solid #413d40; box-shadow: 6px 0 0 -1px #353234; box-sizing: border-box; }
  .app.active::after { content: ''; position: absolute; bottom: 7px; left: 21px; width: 24px; height: 5px; border-radius: 3px; background: #4cc2ff; }
  .g-prime { font: 700 7.200px 'Open Sans', sans-serif; fill: #fff; }
  .g-hulu { font: 800 12px 'Open Sans', sans-serif; fill: #1ce783; }
  .g-word { font: 700 14px 'Open Sans', sans-serif; fill: #fff; }
  .g-alef { font: 700 23px 'Open Sans', sans-serif; fill: #fff; }
  .g-ij { font: 700 11px 'DejaVu Sans Mono', monospace; fill: #fff; }
  .tray { margin-left: 34px; display: flex; align-items: center; flex: none; }
  .tray svg { fill: none; stroke: #fff; stroke-width: 1.700; margin-right: 10px; }
  .tray svg:first-child { margin-right: 26px; }
  .clock { margin-left: auto; display: flex; flex-direction: column; text-align: right; font-size: 17.200px; line-height: 24px; letter-spacing: -0.050px; padding-bottom: 3px; }
  .badge { margin: 0 30px 0 11px; width: 24px; height: 24px; border-radius: 50%; background: #4cc2ff; color: #111; font-size: 14px; line-height: 24px; text-align: center; flex: none; }
</style>
